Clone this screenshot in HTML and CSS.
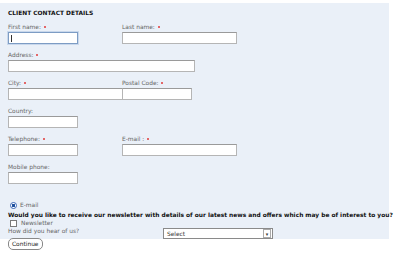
FILE: index.html
```html
<!DOCTYPE html>
<html>
<head>
<meta charset="utf-8">
<link rel="stylesheet" href="styles.css">
</head>
<body>
<div class="panel">
  <div class="title">CLIENT CONTACT DETAILS</div>
  <div class="row">
    <div class="field w1">
      <div class="label">First name: <span class="req"></span></div>
      <span class="wrap"><input class="inp short focus" type="text"><span class="caret"></span></span>
    </div>
    <div class="field">
      <div class="label">Last name: <span class="req"></span></div>
      <input class="inp long" type="text">
    </div>
  </div>
  <div class="row">
    <div class="field">
      <div class="label">Address: <span class="req"></span></div>
      <input class="inp addr" type="text">
    </div>
  </div>
  <div class="row">
    <div class="field w1">
      <div class="label">City: <span class="req"></span></div>
      <input class="inp city" type="text">
    </div>
    <div class="field">
      <div class="label">Postal Code: <span class="req"></span></div>
      <input class="inp short" type="text">
    </div>
  </div>
  <div class="row">
    <div class="field">
      <div class="label">Country:</div>
      <input class="inp short" type="text">
    </div>
  </div>
  <div class="row">
    <div class="field w1">
      <div class="label">Telephone: <span class="req"></span></div>
      <input class="inp short" type="text">
    </div>
    <div class="field">
      <div class="label">E-mail : <span class="req"></span></div>
      <input class="inp long" type="text">
    </div>
  </div>
  <div class="row">
    <div class="field">
      <div class="label">Mobile phone:</div>
      <input class="inp short" type="text">
    </div>
  </div>
  <div class="radio-line"><span class="radio"></span><span>E-mail</span></div>
  <div class="question">Would you like to receive our newsletter with details of our latest news and offers which may be of interest to you?</div>
  <div class="check-line"><span class="check"></span><span>Newsletter</span></div>
  <div class="hear">
    <span class="hear-label">How did you hear of us?</span>
    <span class="select"><span>Select</span><span class="arrow">▾</span></span>
  </div>
</div>
<div class="btn-line"><span class="btn">Continue</span></div>
</body>
</html>
```
FILE: styles.css
```css
body {
  margin: 0;
  font-family: "DejaVu Sans", Verdana, sans-serif;
  font-size: 5.9px;
  color: #666;
  background: #fff;
}
.panel {
  margin-top: 3px;
  width: 381px;
  padding: 7px 0 0 8px;
  height: 229px;
  background: #eaf0f8;
  box-sizing: content-box;
}
.title {
  font-weight: bold;
  color: #111;
  height: 14px;
  line-height: 7px;
}
.row {
  display: flex;
  margin-bottom: 8px;
}
.field.w1 {
  width: 114px;
}
.label {
  height: 7px;
  line-height: 7px;
  margin-bottom: 1px;
}
.req {
  display: inline-block;
  width: 2px;
  height: 2px;
  border-radius: 50%;
  background: #e03a3a;
  vertical-align: 1px;
  margin-left: 1px;
}
.inp {
  display: block;
  box-sizing: border-box;
  height: 12px;
  margin: 0;
  padding: 0;
  border: 1px solid #b5b5b5;
  border-top-color: #9a9a9a;
  background: #fff;
  outline: none;
}
.short { width: 70px; }
.long { width: 115px; }
.addr { width: 187px; }
.city { width: 115px; }
.focus {
  border: 1px solid #7d9cc4;
  box-shadow: 0 0 0 1px #c9d8ec;
}
.wrap {
  position: relative;
  display: block;
}
.caret {
  position: absolute;
  left: 3px;
  top: 3px;
  width: 1px;
  height: 7px;
  background: #333;
}
.radio-line {
  display: flex;
  align-items: center;
  gap: 3px;
  margin-top: 17px;
  margin-left: 2px;
  height: 8px;
}
.radio {
  width: 5px;
  height: 5px;
  border-radius: 50%;
  border: 1px solid #3a68b8;
  background: radial-gradient(circle, #1d4f9c 0 1.4px, #fff 1.8px);
}
.question {
  font-weight: bold;
  color: #111;
  margin-top: 2px;
  height: 8px;
  line-height: 8px;
  white-space: nowrap;
}
.check-line {
  display: flex;
  align-items: center;
  gap: 4px;
  margin-left: 2px;
  height: 8px;
}
.check {
  width: 5px;
  height: 5px;
  border: 1px solid #7a7a7a;
  background: #fff;
}
.hear {
  display: flex;
  align-items: flex-start;
  height: 9px;
}
.hear-label {
  width: 155px;
  line-height: 8px;
}
.select {
  display: flex;
  justify-content: space-between;
  align-items: center;
  box-sizing: border-box;
  width: 110px;
  height: 11px;
  margin-top: 1px;
  padding-left: 3px;
  padding-right: 1px;
  border: 1px solid #8a8a8a;
  background: #fff;
  color: #333;
}
.arrow {
  display: flex;
  align-items: center;
  justify-content: center;
  width: 6px;
  height: 7px;
  border: 1px solid #aaa;
  font-size: 5px;
  color: #333;
}
.btn-line {
  padding-left: 8px;
  margin-top: -1px;
}
.btn {
  display: inline-block;
  padding: 2px 3px;
  border: 1px solid #888;
  border-radius: 5px;
  color: #222;
  line-height: 6px;
  background: #fff;
}
```
